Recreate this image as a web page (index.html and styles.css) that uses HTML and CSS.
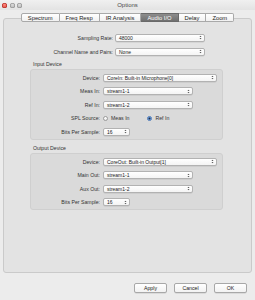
FILE: index.html
```html
<!DOCTYPE html>
<html>
<head>
  <meta charset="UTF-8">
  <title>Options</title>
  <link rel="stylesheet" href="styles.css">
</head>
<body>
  <div class="window">
    <div class="titlebar">
      <div class="lights">
        <span class="light red"></span>
        <span class="light"></span>
        <span class="light"></span>
      </div>
      <div class="title">Options</div>
    </div>

    <div class="content">
      <div class="tabs">
        <div class="tab">Spectrum</div>
        <div class="tab">Freq Resp</div>
        <div class="tab">IR Analysis</div>
        <div class="tab selected">Audio I/O</div>
        <div class="tab">Delay</div>
        <div class="tab">Zoom</div>
      </div>

      <div class="panel">
        <div class="top-rows">
          <div class="row">
            <div class="label wide">Sampling Rate:</div>
            <div class="select w90">48000<svg class="arrows" viewBox="0 0 4 6"><path d="M0.6 2.4L2 0.6L3.4 2.4Z M0.6 3.6L2 5.4L3.4 3.6Z"/></svg></div>
          </div>
          <div class="row">
            <div class="label wide">Channel Name and Pairs:</div>
            <div class="select w90">None<svg class="arrows" viewBox="0 0 4 6"><path d="M0.6 2.4L2 0.6L3.4 2.4Z M0.6 3.6L2 5.4L3.4 3.6Z"/></svg></div>
          </div>
        </div>

        <div class="group">
          <div class="group-title">Input Device</div>
          <div class="group-box">
            <div class="row">
              <div class="label">Device:</div>
              <div class="select w114">CoreIn: Built-in Microphone[0]<svg class="arrows" viewBox="0 0 4 6"><path d="M0.6 2.4L2 0.6L3.4 2.4Z M0.6 3.6L2 5.4L3.4 3.6Z"/></svg></div>
            </div>
            <div class="row">
              <div class="label">Meas In:</div>
              <div class="select w90">stream1-1<svg class="arrows" viewBox="0 0 4 6"><path d="M0.6 2.4L2 0.6L3.4 2.4Z M0.6 3.6L2 5.4L3.4 3.6Z"/></svg></div>
            </div>
            <div class="row">
              <div class="label">Ref In:</div>
              <div class="select w90">stream1-2<svg class="arrows" viewBox="0 0 4 6"><path d="M0.6 2.4L2 0.6L3.4 2.4Z M0.6 3.6L2 5.4L3.4 3.6Z"/></svg></div>
            </div>
            <div class="row">
              <div class="label">SPL Source:</div>
              <div class="radios">
                <div class="radio-item"><span class="radio"></span>Meas In</div>
                <div class="radio-item"><span class="radio checked"></span>Ref In</div>
              </div>
            </div>
            <div class="row">
              <div class="label">Bits Per Sample:</div>
              <div class="select w27">16<svg class="arrows" viewBox="0 0 4 6"><path d="M0.6 2.4L2 0.6L3.4 2.4Z M0.6 3.6L2 5.4L3.4 3.6Z"/></svg></div>
            </div>
          </div>
        </div>

        <div class="group">
          <div class="group-title">Output Device</div>
          <div class="group-box">
            <div class="row">
              <div class="label">Device:</div>
              <div class="select w114">CoreOut: Built-in Output[1]<svg class="arrows" viewBox="0 0 4 6"><path d="M0.6 2.4L2 0.6L3.4 2.4Z M0.6 3.6L2 5.4L3.4 3.6Z"/></svg></div>
            </div>
            <div class="row">
              <div class="label">Main Out:</div>
              <div class="select w90">stream1-1<svg class="arrows" viewBox="0 0 4 6"><path d="M0.6 2.4L2 0.6L3.4 2.4Z M0.6 3.6L2 5.4L3.4 3.6Z"/></svg></div>
            </div>
            <div class="row">
              <div class="label">Aux Out:</div>
              <div class="select w90">stream1-2<svg class="arrows" viewBox="0 0 4 6"><path d="M0.6 2.4L2 0.6L3.4 2.4Z M0.6 3.6L2 5.4L3.4 3.6Z"/></svg></div>
            </div>
            <div class="row">
              <div class="label">Bits Per Sample:</div>
              <div class="select w27">16<svg class="arrows" viewBox="0 0 4 6"><path d="M0.6 2.4L2 0.6L3.4 2.4Z M0.6 3.6L2 5.4L3.4 3.6Z"/></svg></div>
            </div>
          </div>
        </div>
      </div>

      <div class="buttons">
        <div class="btn">Apply</div>
        <div class="btn">Cancel</div>
        <div class="btn">OK</div>
      </div>
    </div>
  </div>
</body>
</html>
```

FILE: styles.css
```css
body {
  margin: 0;
  font-family: 'Liberation Sans', 'DejaVu Sans', sans-serif;
  font-size: 5.2px;
  color: #333;
  background-color: #ececec;
}
.window {
  width: 255px;
  height: 300px;
  background-color: #ececec;
  display: flex;
  flex-direction: column;
}
.titlebar {
  height: 10px;
  display: flex;
  align-items: center;
  background: linear-gradient(#f0f0f0, #e3e3e3);
}
.lights {
  display: flex;
  gap: 2.5px;
  padding-left: 2px;
}
.light {
  width: 5px;
  height: 5px;
  border-radius: 50%;
  background: radial-gradient(circle at 50% 35%, #dcdcdc, #a9a9a9);
  box-shadow: inset 0 0 0 0.5px #8c8c8c;
}
.light.red {
  background: radial-gradient(circle at 50% 35%, #ff8a80, #d9352b);
  box-shadow: inset 0 0 0 0.5px #a8261f;
}
.title {
  flex: 1;
  text-align: center;
  margin-right: 22px;
  font-size: 6px;
  color: #4a4a4a;
}
.content {
  display: flex;
  flex-direction: column;
  padding-top: 3px;
}
.tabs {
  display: flex;
  justify-content: center;
  height: 9px;
  position: relative;
  z-index: 1;
}
.tab {
  display: flex;
  align-items: center;
  padding: 0 6px;
  font-size: 5.8px;
  background: linear-gradient(#ffffff, #f1f1f1);
  border: 0.5px solid #a9a9a9;
  border-left: none;
  color: #222;
}
.tab:first-child {
  border-left: 0.5px solid #a9a9a9;
  border-radius: 2px 0 0 2px;
}
.tab:last-child {
  border-radius: 0 2px 2px 0;
}
.tab.selected {
  background: linear-gradient(#8e8e8e, #6f6f6f);
  color: #fff;
  border-color: #6a6a6a;
}
.panel {
  margin: -4.5px 3px 0 3px;
  height: 255.5px;
  box-sizing: border-box;
  border: 1px solid #cacaca;
  border-radius: 3px;
  background-color: #e3e3e3;
  padding-top: 15px;
  display: flex;
  flex-direction: column;
}
.top-rows {
  display: flex;
  flex-direction: column;
  gap: 6px;
}
.row {
  display: flex;
  align-items: center;
  height: 8px;
}
.label {
  text-align: right;
  flex-shrink: 0;
  box-sizing: border-box;
}
.label.wide {
  width: 111px;
  padding-right: 2px;
}
.group-box .label {
  width: 72px;
  padding-right: 3px;
}
.select {
  height: 8px;
  box-sizing: border-box;
  background: linear-gradient(#ffffff, #f4f4f4);
  border: 0.5px solid #b2b2b2;
  border-radius: 2px;
  box-shadow: 0 0.5px 0.5px rgba(0, 0, 0, 0.12);
  display: flex;
  align-items: center;
  justify-content: space-between;
  padding: 0 2px 0 3px;
  color: #222;
  font-size: 5px;
  white-space: nowrap;
}
.w90 {
  width: 90px;
}
.w114 {
  width: 114px;
}
.w27 {
  width: 27px;
}
.arrows {
  width: 3px;
  height: 5px;
  fill: #555;
  flex-shrink: 0;
}
.group {
  display: flex;
  flex-direction: column;
  margin: 4px 0 0 26px;
  width: 193px;
}
.group-title {
  height: 8px;
  line-height: 8px;
  padding-left: 3px;
  margin-bottom: 1px;
}
.group-box {
  border: 1px solid #cfcfcf;
  border-radius: 3px;
  background-color: #dadada;
  padding: 4px 0 3px 0;
  display: flex;
  flex-direction: column;
  gap: 5.5px;
}
.radios {
  display: flex;
  align-items: center;
  gap: 18px;
}
.radio-item {
  display: flex;
  align-items: center;
  gap: 3px;
}
.radio {
  width: 5px;
  height: 5px;
  box-sizing: border-box;
  border-radius: 50%;
  border: 0.5px solid #9a9a9a;
  background: linear-gradient(#ffffff, #ececec);
}
.radio.checked {
  border-color: #4a78b8;
  background: radial-gradient(circle, #1d2a44 0 0.9px, #7fb0ea 1.1px, #4f8fdc 100%);
}
.buttons {
  display: flex;
  justify-content: flex-end;
  gap: 7px;
  margin-top: 10px;
  padding-right: 8px;
}
.btn {
  width: 33px;
  height: 10px;
  box-sizing: border-box;
  display: flex;
  align-items: center;
  justify-content: center;
  background: linear-gradient(#ffffff, #f2f2f2);
  border: 0.5px solid #a8a8a8;
  border-radius: 2px;
  box-shadow: 0 0.5px 0.5px rgba(0, 0, 0, 0.15);
  color: #222;
}
```
